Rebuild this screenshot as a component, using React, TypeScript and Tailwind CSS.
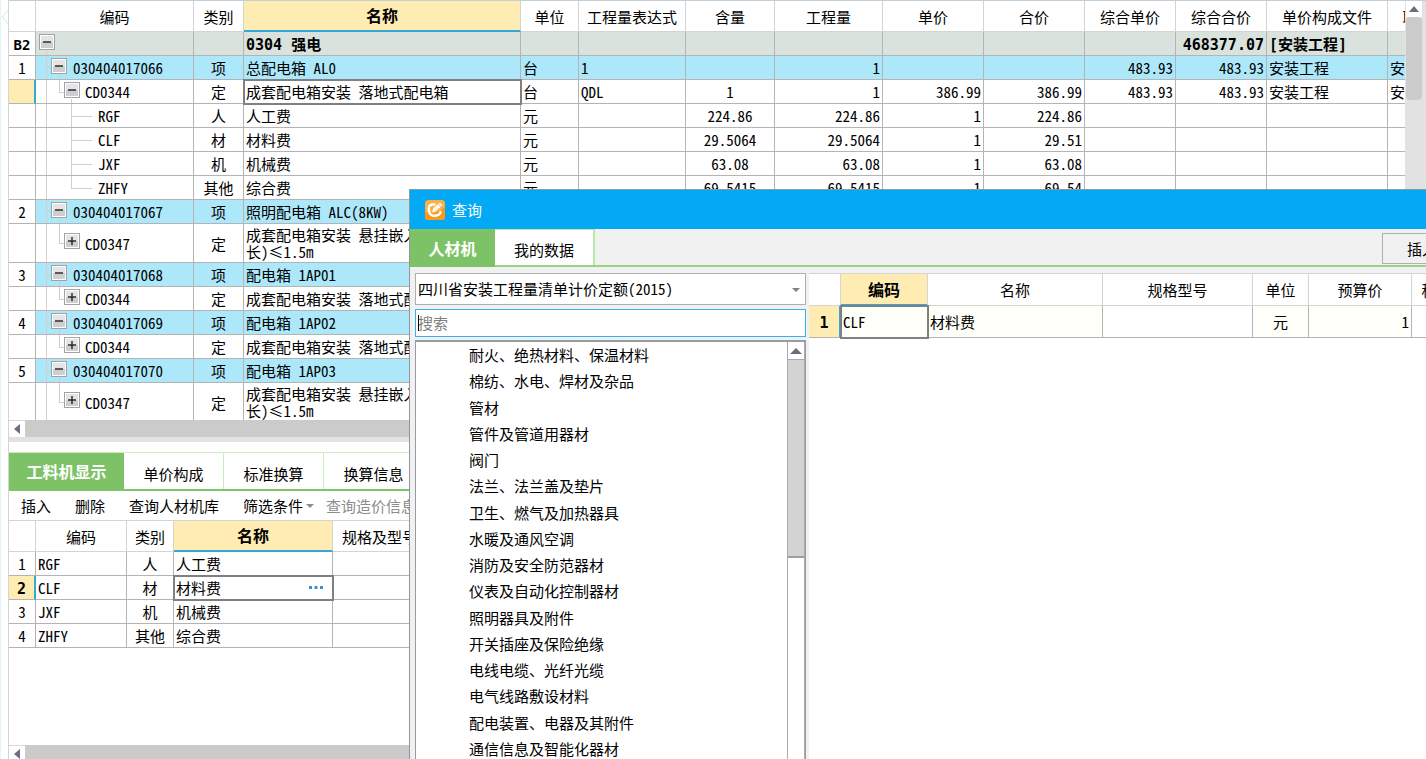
import React from "react";
import clsx from "clsx";

type Row = {
  no?: string;
  level: 0 | 1 | 2 | 3;
  open?: boolean;
  last?: boolean;
  code?: string;
  kind?: string;
  name: string;
  unit?: string;
  expr?: string;
  content?: string;
  qty?: string;
  price?: string;
  total?: string;
  unitSum?: string;
  totalSum?: string;
  file?: string;
  trade?: string;
  selected?: boolean;
  tall?: boolean;
};

const columns = [
  { label: "", width: "w-[27px]" },
  { label: "编码", width: "w-[158px]" },
  { label: "类别", width: "w-[50px]" },
  { label: "名称", width: "w-[277px]" },
  { label: "单位", width: "w-[58px]" },
  { label: "工程量表达式", width: "w-[107px]" },
  { label: "含量", width: "w-[89px]" },
  { label: "工程量", width: "w-[108px]" },
  { label: "单价", width: "w-[101px]" },
  { label: "合价", width: "w-[101px]" },
  { label: "综合单价", width: "w-[91px]" },
  { label: "综合合价", width: "w-[91px]" },
  { label: "单价构成文件", width: "w-[121px]" },
  { label: "取费专业", width: "w-[90px]" },
];

const wallBox = "成套配电箱安装 悬挂嵌入式(半周\n长)≤1.5m";
const floorBox = "成套配电箱安装 落地式配电箱";

const rows: Row[] = [
  { no: "B2", level: 0, open: true, name: "0304 强电", totalSum: "468377.07", file: "[安装工程]" },
  { no: "1", level: 1, open: true, code: "030404017066", kind: "项", name: "总配电箱 AL0", unit: "台", expr: "1", qty: "1", unitSum: "483.93", totalSum: "483.93", file: "安装工程", trade: "安装工程" },
  { level: 2, open: true, code: "CD0344", kind: "定", name: floorBox, unit: "台", expr: "QDL", content: "1", qty: "1", price: "386.99", total: "386.99", unitSum: "483.93", totalSum: "483.93", file: "安装工程", trade: "安装工程", selected: true },
  { level: 3, code: "RGF", kind: "人", name: "人工费", unit: "元", content: "224.86", qty: "224.86", price: "1", total: "224.86" },
  { level: 3, code: "CLF", kind: "材", name: "材料费", unit: "元", content: "29.5064", qty: "29.5064", price: "1", total: "29.51" },
  { level: 3, code: "JXF", kind: "机", name: "机械费", unit: "元", content: "63.08", qty: "63.08", price: "1", total: "63.08" },
  { level: 3, last: true, code: "ZHFY", kind: "其他", name: "综合费", unit: "元", content: "69.5415", qty: "69.5415", price: "1", total: "69.54" },
  { no: "2", level: 1, open: true, code: "030404017067", kind: "项", name: "照明配电箱 ALC(8KW)" },
  { level: 2, code: "CD0347", kind: "定", name: wallBox, tall: true },
  { no: "3", level: 1, open: true, code: "030404017068", kind: "项", name: "配电箱 1AP01" },
  { level: 2, code: "CD0344", kind: "定", name: floorBox },
  { no: "4", level: 1, open: true, code: "030404017069", kind: "项", name: "配电箱 1AP02" },
  { level: 2, code: "CD0344", kind: "定", name: floorBox },
  { no: "5", level: 1, open: true, code: "030404017070", kind: "项", name: "配电箱 1AP03" },
  { level: 2, code: "CD0347", kind: "定", name: wallBox, tall: true },
];

const resources = [
  { code: "RGF", kind: "人", name: "人工费" },
  { code: "CLF", kind: "材", name: "材料费" },
  { code: "JXF", kind: "机", name: "机械费" },
  { code: "ZHFY", kind: "其他", name: "综合费" },
];

const categories = [
  "耐火、绝热材料、保温材料",
  "棉纺、水电、焊材及杂品",
  "管材",
  "管件及管道用器材",
  "阀门",
  "法兰、法兰盖及垫片",
  "卫生、燃气及加热器具",
  "水暖及通风空调",
  "消防及安全防范器材",
  "仪表及自动化控制器材",
  "照明器具及附件",
  "开关插座及保险绝缘",
  "电线电缆、光纤光缆",
  "电气线路敷设材料",
  "配电装置、电器及其附件",
  "通信信息及智能化器材",
];

const cell = "border-r border-b border-[#b4b4b4] px-[2px]";
const headCell = "border-r border-[#d4d4d4] p-0";
const headPlain = "border-b font-normal";
const headActive = "border-b-2 border-b-[#35a8d6] bg-[#ffecb3] text-[16px] font-bold";
const boldMono = "font-['DejaVu_Sans_Mono','Noto_Sans_CJK_SC',monospace] font-bold";

function Toggle({ open }: { open?: boolean }) {
  return (
    <button type="button" aria-label={open ? "收起" : "展开"} className="relative mb-1 block size-4 shrink-0">
      <svg viewBox="0 0 16 16" className="size-4">
        <rect x="0.5" y="0.5" width="15" height="15" fill="#fff" stroke="#a2a2a2" />
        <rect x="2" y="2" width="12" height="12" fill="#e3e4e6" />
        <path d="M2 14V8h12v6z" fill="#cdced2" />
        <path d="M4 8h8" stroke="#222" strokeWidth="1.4" />
        {!open && <path d="M8 4v8" stroke="#222" strokeWidth="1.4" />}
      </svg>
    </button>
  );
}

// Tree lines behind the code column
function Guides({ row }: { row: Row }) {
  const line = "absolute bg-[#cfcfcf]";
  return (
    <>
      {row.level === 0 && <span className={clsx(line, "bottom-0 left-[10px] h-1 w-px")} />}
      {row.level > 0 && <span className={clsx(line, "inset-y-0 left-[10px] w-px")} />}
      {row.level === 1 && (
        <>
          <span className={clsx(line, "left-[10px] top-[11px] h-px w-[5px]")} />
          <span className={clsx(line, "bottom-0 left-[23px] h-1 w-px")} />
        </>
      )}
      {row.level === 2 && (
        <>
          <span className={clsx(line, "left-[23px] top-0 h-1/2 w-px")} />
          <span className={clsx(line, "left-[23px] top-1/2 h-px w-[5px]")} />
          {row.open && <span className={clsx(line, "bottom-0 left-[35px] h-1 w-px")} />}
        </>
      )}
      {row.level === 3 && (
        <>
          <span className={clsx(line, "left-[35px] top-0 w-px", row.last ? "h-1/2" : "h-full")} />
          <span className={clsx(line, "left-[35px] top-1/2 h-px w-[21px]")} />
        </>
      )}
    </>
  );
}

function BudgetRow({ row }: { row: Row }) {
  const box = clsx(cell, row.level === 0 && "pt-1");
  return (
    <tr
      className={clsx(
        row.tall ? "h-[39px]" : "h-6",
        row.level === 0 && ["bg-[#d9e2dd]", boldMono],
        row.level === 1 && "bg-[#ade8fa]",
      )}
    >
      <td
        className={clsx(
          box,
          "text-center",
          row.selected ? "border-r-2 border-r-[#35a8d6] bg-[#ffecb3]" : "bg-white",
          row.level === 0 && "text-[14px]",
        )}
      >
        {row.no}
      </td>
      <td className={clsx(cell, "relative")}>
        <Guides row={row} />
        <div
          className={clsx(
            "relative flex items-center",
            row.level === 0 && "pl-px",
            row.level === 1 && "gap-[6px] pl-[13px]",
            row.level === 2 && "gap-[5px] pl-[26px]",
            row.level === 3 && "pl-[60px]",
          )}
        >
          {row.level < 3 && <Toggle open={row.open} />}
          <span>{row.code}</span>
        </div>
      </td>
      <td className={clsx(box, "text-center")}>{row.kind}</td>
      <td
        className={clsx(
          box,
          row.tall && "whitespace-pre",
          row.selected && "outline-2 -outline-offset-1 outline-[#808080]",
        )}
      >
        {row.name}
      </td>
      <td className={box}>{row.unit}</td>
      <td className={box}>{row.expr}</td>
      <td className={clsx(box, "text-center")}>{row.content}</td>
      <td className={clsx(box, "text-right")}>{row.qty}</td>
      <td className={clsx(box, "text-right")}>{row.price}</td>
      <td className={clsx(box, "text-right")}>{row.total}</td>
      <td className={clsx(box, "text-right")}>{row.unitSum}</td>
      <td className={clsx(box, "text-right")}>{row.totalSum}</td>
      <td className={box}>{row.file}</td>
      <td className={box}>{row.trade}</td>
    </tr>
  );
}

function HorizontalScroll() {
  return (
    <div className="flex h-[17px] shrink-0 bg-[#cbcbcb]">
      <button type="button" aria-label="向左滚动" className="flex w-4 items-center justify-center border-t border-[#d8d8d8] bg-white">
        <svg viewBox="0 0 6 10" className="h-[10px] w-[6px]">
          <path d="M6 0v10L0 5z" fill="#6b6e7c" />
        </svg>
      </button>
    </div>
  );
}

function BudgetPanel() {
  return (
    <section className="flex h-[442px] shrink-0 flex-col border-t border-[#c3cfd6]">
      <div className="flex min-h-0 flex-1">
        <div className="min-w-0 flex-1 overflow-hidden">
          <table className="w-[1469px] table-fixed border-separate border-spacing-0">
            <thead>
              <tr className="h-[31px]">
                {columns.map((col) => (
                  <th
                    key={col.label}
                    className={clsx(headCell, col.width, col.label === "名称" ? headActive : headPlain)}
                  >
                    {col.label}
                  </th>
                ))}
              </tr>
            </thead>
            <tbody>
              {rows.map((row, i) => (
                <BudgetRow key={i} row={row} />
              ))}
            </tbody>
          </table>
        </div>
        <div className="flex w-[21px] flex-col bg-[#e2e2e2] pl-px pr-1">
          <button type="button" aria-label="向上滚动" className="flex h-4 items-center justify-center bg-white">
            <svg viewBox="0 0 10 6" className="h-[6px] w-[10px]">
              <path d="M0 6h10L5 0z" fill="#6b6e7c" />
            </svg>
          </button>
          <div className="h-[83px] rounded-sm bg-[#cbcbcb]" />
        </div>
      </div>
      <HorizontalScroll />
      <div className="h-[5px] shrink-0 bg-[#e2e2e2]" />
    </section>
  );
}

function ResourcePanel() {
  return (
    <section className="flex min-h-0 flex-1 flex-col pt-[10px]">
      <div className="flex h-[39px] shrink-0 border-t border-b-2 border-t-[#c8efbb] border-b-[#7fc66b]">
        <button type="button" className="-mb-px w-[115px] bg-[#7dc267] text-[16px] font-bold text-white">
          工料机显示
        </button>
        {["单价构成", "标准换算", "换算信息"].map((tab) => (
          <button key={tab} type="button" className="w-[100px] border-r border-[#c8efbb] pt-1">
            {tab}
          </button>
        ))}
      </div>
      <div className="flex h-[29px] shrink-0 items-center gap-6 pl-3">
        <button type="button">插入</button>
        <button type="button">删除</button>
        <button type="button">查询人材机库</button>
        <div className="flex gap-3">
          <button type="button" className="flex items-center gap-[3px]">
            筛选条件
            <svg viewBox="0 0 8 4" className="h-1 w-2">
              <path d="M0 0h8L4 4z" fill="#8a8d99" />
            </svg>
          </button>
          <button type="button" disabled className="text-[#8c8c8c]">
            查询造价信息
          </button>
        </div>
      </div>
      <div className="min-h-0 flex-1 overflow-hidden border-t border-[#d4d4d4]">
        <table className="w-[500px] table-fixed border-separate border-spacing-0">
          <thead>
            <tr className="h-[31px]">
              <th className={clsx(headCell, headPlain, "w-[27px]")} />
              <th className={clsx(headCell, headPlain, "w-[91px]")}>编码</th>
              <th className={clsx(headCell, headPlain, "w-[47px]")}>类别</th>
              <th className={clsx(headCell, headActive, "w-[159px]")}>名称</th>
              <th className={clsx(headCell, headPlain, "pr-[82px]")}>规格及型号</th>
            </tr>
          </thead>
          <tbody>
            {resources.map((res, i) => {
              const active = res.code === "CLF";
              return (
                <tr key={res.code} className="h-6">
                  <td
                    className={clsx(
                      cell,
                      "text-center",
                      active && ["border-r-2 border-r-[#35a8d6] bg-[#ffecb3] pt-[3px]", boldMono],
                    )}
                  >
                    {i + 1}
                  </td>
                  <td className={cell}>{res.code}</td>
                  <td className={clsx(cell, "text-center")}>{res.kind}</td>
                  <td className={clsx(cell, active && "outline-2 -outline-offset-1 outline-[#808080]")}>
                    <div className="flex items-center justify-between pr-[7px]">
                      {res.name}
                      {active && (
                        <button type="button" aria-label="更多">
                          <svg viewBox="0 0 14 3" className="h-[3px] w-[14px]">
                            <path d="M0 0h3v3H0zM5.500 0h3v3h-3zM11 0h3v3h-3z" fill="#3a93d6" />
                          </svg>
                        </button>
                      )}
                    </div>
                  </td>
                  <td className={cell} />
                </tr>
              );
            })}
          </tbody>
        </table>
      </div>
      <div className="-mb-[3px]">
        <HorizontalScroll />
      </div>
    </section>
  );
}

function QueryDialog() {
  return (
    <div
      role="dialog"
      aria-label="查询"
      className="absolute bottom-0 left-[409px] right-0 top-[189px] flex flex-col overflow-hidden border-l border-t border-[#8e979c] bg-[#f1f1f1]"
    >
      <header className="flex h-[39px] shrink-0 items-center gap-[7px] bg-[#03a9f4] pl-[15px] text-white">
        <svg viewBox="0 0 20 20" className="size-5">
          <rect width="20" height="20" rx="3.5" fill="#fbb040" />
          <path d="M0 12c6 3 13 1 20-5v9.500a3.500 3.500 0 0 1-3.500 3.500h-13A3.500 3.500 0 0 1 0 16.500z" fill="#f99a1c" />
          <path
            d="M9.500 4.500H7C4.500 5 3.500 7 3.800 9.500c.2 3 1.200 5.500 3.700 6 2.500.4 5 0 6.500-1 1.200-.8 1.500-1.500 1.500-2.500"
            fill="none"
            stroke="#fff"
            strokeWidth="2.400"
            strokeLinecap="round"
          />
          <path d="M7 12.500 8.500 8l6.500-5.500 2.500 2.800L11 11z" fill="#fff" />
          <path d="m13.500 4 2.500 2.800" stroke="#f99a1c" strokeWidth="0.8" />
        </svg>
        查询
      </header>

      <div className="flex h-[38px] shrink-0 border-b-2 border-[#97d486]">
        <button type="button" className="-mb-[2px] w-[85px] bg-[#7dc267] text-[16px] font-bold text-white">
          人材机
        </button>
        <button type="button" className="w-[100px] border-r-2 border-t border-[#b9e9a8] bg-white pt-1">
          我的数据
        </button>
        <button type="button" className="-mr-9 ml-auto mt-1 h-[31px] w-20 border border-[#b0b0b0]">
          插入
        </button>
      </div>

      <div className="flex min-h-0 flex-1 gap-[3px] pl-[5px] pt-[6px]">
        <div className="flex w-[391px] shrink-0 flex-col">
          <div className="relative">
            <select aria-label="定额库" className="block h-8 w-full appearance-none border border-[#adb0b3] bg-white pb-[2px] pl-[2px]">
              <option>四川省安装工程量清单计价定额(2015)</option>
            </select>
            <svg viewBox="0 0 8 4" className="pointer-events-none absolute right-[6px] top-[15px] h-1 w-2">
              <path d="M0 0h8L4 4z" fill="#7c7f8c" />
            </svg>
          </div>
          <div className="relative mt-1">
            <input
              type="text"
              aria-label="搜索"
              placeholder="搜索"
              className="block h-7 w-full border border-[#35b1ee] bg-white pb-[2px] pl-[2px] outline-none placeholder:text-[#808080]"
            />
            <span className="absolute left-[3px] top-[6px] h-4 w-px bg-black" />
          </div>
          <div className="mt-[3px] flex min-h-0 flex-1 overflow-hidden border-x border-t-2 border-[#979ba3] bg-white">
            <ul className="grid h-[420px] flex-1 auto-rows-fr pl-[53px]">
              {categories.map((name) => (
                <li key={name} className="flex items-center pb-px">
                  {name}
                </li>
              ))}
            </ul>
            <div className="flex w-[18px] flex-col border-x border-[#a9abb0]">
              <button type="button" aria-label="向上滚动" className="flex h-[18px] shrink-0 items-center justify-center border-b border-[#a9abb0]">
                <svg viewBox="0 0 12 6" className="h-[6px] w-3">
                  <path d="M0 6h12L6 0z" fill="#6b6e7c" />
                </svg>
              </button>
              <div className="h-[198px] shrink-0 border-b-2 border-[#a0a0a0] bg-[#d3d3d3]" />
            </div>
          </div>
        </div>

        <div className="min-w-0 flex-1 overflow-hidden border-t border-[#d4d4d4] bg-white">
          <table className="w-[653px] table-fixed border-separate border-spacing-0">
            <thead>
              <tr className="h-8">
                <th className={clsx(headCell, headPlain, "w-8")} />
                <th className={clsx(headCell, headActive, "w-[87px]")}>编码</th>
                <th className={clsx(headCell, headPlain, "w-[175px]")}>名称</th>
                <th className={clsx(headCell, headPlain, "w-[150px]")}>规格型号</th>
                <th className={clsx(headCell, headPlain, "w-[56px]")}>单位</th>
                <th className={clsx(headCell, headPlain, "w-[103px]")}>预算价</th>
                <th className={clsx(headCell, headPlain, "w-[50px]")}>税率</th>
              </tr>
            </thead>
            <tbody>
              <tr className="h-8 bg-[#fffffa]">
                <td className={clsx(cell, boldMono, "border-r-2 border-r-[#35a8d6] bg-[#ffecb3] pt-[3px] text-center")}>1</td>
                <td className={clsx(cell, "outline-2 -outline-offset-1 outline-[#808080]")}>CLF</td>
                <td className={cell}>材料费</td>
                <td className={clsx(cell, "bg-white")} />
                <td className={clsx(cell, "text-center")}>元</td>
                <td className={clsx(cell, "text-right")}>1</td>
                <td className={clsx(cell, "bg-white")} />
              </tr>
            </tbody>
          </table>
        </div>
      </div>
    </div>
  );
}

export default function App() {
  return (
    <div className="relative flex h-screen overflow-hidden bg-white font-['Noto_Sans_Mono_CJK_SC','Noto_Sans_CJK_SC',monospace] text-[15px] leading-[17px] text-black">
      <aside className="w-2 shrink-0 border-l border-[#e3f4fa]">
        <svg viewBox="0 0 8 32" className="h-8 w-2">
          <path d="M7.500 0v10L1 17l6.500 7v8" fill="none" stroke="#d9e2e8" />
        </svg>
      </aside>
      <main className="flex min-w-0 flex-1 flex-col border-l border-[#d4d4d4]">
        <BudgetPanel />
        <ResourcePanel />
      </main>
      <QueryDialog />
    </div>
  );
}
